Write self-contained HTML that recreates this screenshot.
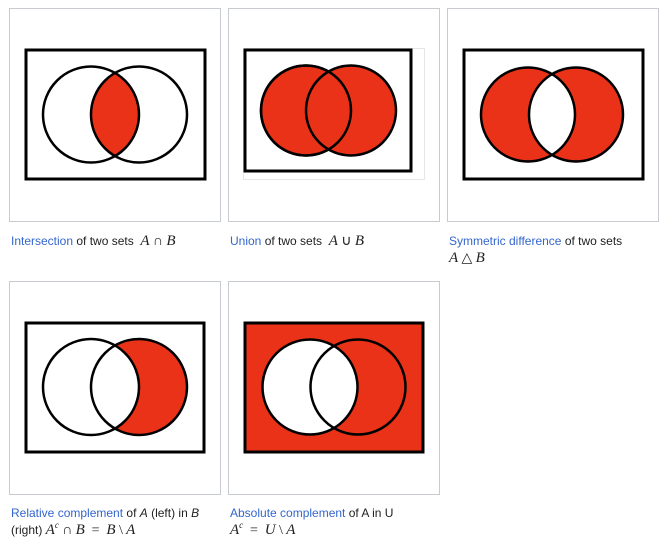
<!DOCTYPE html>
<html><head><meta charset="utf-8"><style>
body{margin:0;width:672px;height:550px;background:#fff;position:relative;font-family:"Liberation Sans",Arial,sans-serif;font-size:12px;color:#202122;overflow:hidden}
.box{position:absolute;border:1px solid #c8ccd1;box-sizing:border-box;width:212px;height:214px}
.cap{position:absolute;line-height:17px;white-space:nowrap}
.cap div{height:17px}
a{color:#3366cc;text-decoration:none}
.m{font-family:"Liberation Serif",serif;font-style:italic;font-size:15px;line-height:0}
.r{font-family:"Liberation Serif",serif;font-size:14px;line-height:0}
sup{font-size:9px;line-height:0;vertical-align:6px}
svg{position:absolute;left:0;top:0}
</style></head><body>
<div class="box" style="left:9px;top:8px"></div>
<div class="box" style="left:228px;top:8px"></div>
<div class="box" style="left:447px;top:8px"></div>
<div class="box" style="left:9px;top:281px"></div>
<div class="box" style="left:228px;top:281px"></div>
<svg width="672" height="550" viewBox="0 0 672 550">
<defs>
<clipPath id="cA1"><circle cx="91" cy="114.5" r="48"/></clipPath>
<clipPath id="cA3"><circle cx="528" cy="114.5" r="47"/></clipPath>
</defs>
<g stroke="#000" stroke-width="2.5" fill="none">
<rect x="26" y="50" width="179" height="129" stroke-width="3"/>
<circle cx="139" cy="114.5" r="48" fill="#ea3219" clip-path="url(#cA1)" stroke="none"/>
<circle cx="91" cy="114.5" r="48"/><circle cx="139" cy="114.5" r="48"/>
<rect x="243.5" y="48.5" width="181" height="131" stroke="#e6e6e6" stroke-width="1"/>
<rect x="245" y="50" width="166" height="121" stroke-width="3"/>
<circle cx="306" cy="110.5" r="45" fill="#ea3219"/><circle cx="351" cy="110.5" r="45" fill="#ea3219"/>
<circle cx="306" cy="110.5" r="45"/>
<rect x="464" y="50" width="179" height="129" stroke-width="3"/>
<circle cx="528" cy="114.5" r="47" fill="#ea3219" stroke="none"/><circle cx="576" cy="114.5" r="47" fill="#ea3219" stroke="none"/>
<circle cx="576" cy="114.5" r="47" fill="#fff" clip-path="url(#cA3)" stroke="none"/>
<circle cx="528" cy="114.5" r="47"/><circle cx="576" cy="114.5" r="47"/>
<rect x="26" y="323" width="178" height="129" stroke-width="3"/>
<circle cx="139" cy="387" r="48" fill="#ea3219" stroke="none"/>
<circle cx="91" cy="387" r="48" fill="#fff"/><circle cx="139" cy="387" r="48"/>
<rect x="245" y="323" width="178" height="129" fill="#ea3219" stroke-width="3"/>
<circle cx="310" cy="387" r="47.5" fill="#fff"/><circle cx="358" cy="387" r="47.5"/>
</g>
</svg>
<div class="cap" style="left:11px;top:233px"><a>Intersection</a> of two sets &nbsp;<span class="m">A</span> <span class="r">∩</span> <span class="m">B</span></div>
<div class="cap" style="left:230px;top:233px"><a>Union</a> of two sets &nbsp;<span class="m">A</span> <span class="r">∪</span> <span class="m">B</span></div>
<div class="cap" style="left:449px;top:233px"><div><a>Symmetric difference</a> of two sets</div><div><span class="m">A</span> <span class="r">△</span> <span class="m">B</span></div></div>
<div class="cap" style="left:11px;top:505px"><div><a>Relative complement</a> of <i>A</i> (left) in <i>B</i></div><div>(right) <span class="m">A<sup>c</sup></span> <span class="r">∩</span> <span class="m">B</span> <span class="r">&nbsp;=&nbsp;</span> <span class="m">B</span> <span class="r">\</span> <span class="m">A</span></div></div>
<div class="cap" style="left:230px;top:505px"><div><a>Absolute complement</a> of A in U</div><div><span class="m">A<sup>c</sup></span> <span class="r">&nbsp;=&nbsp;</span> <span class="m">U</span> <span class="r">\</span> <span class="m">A</span></div></div>
</body></html>
